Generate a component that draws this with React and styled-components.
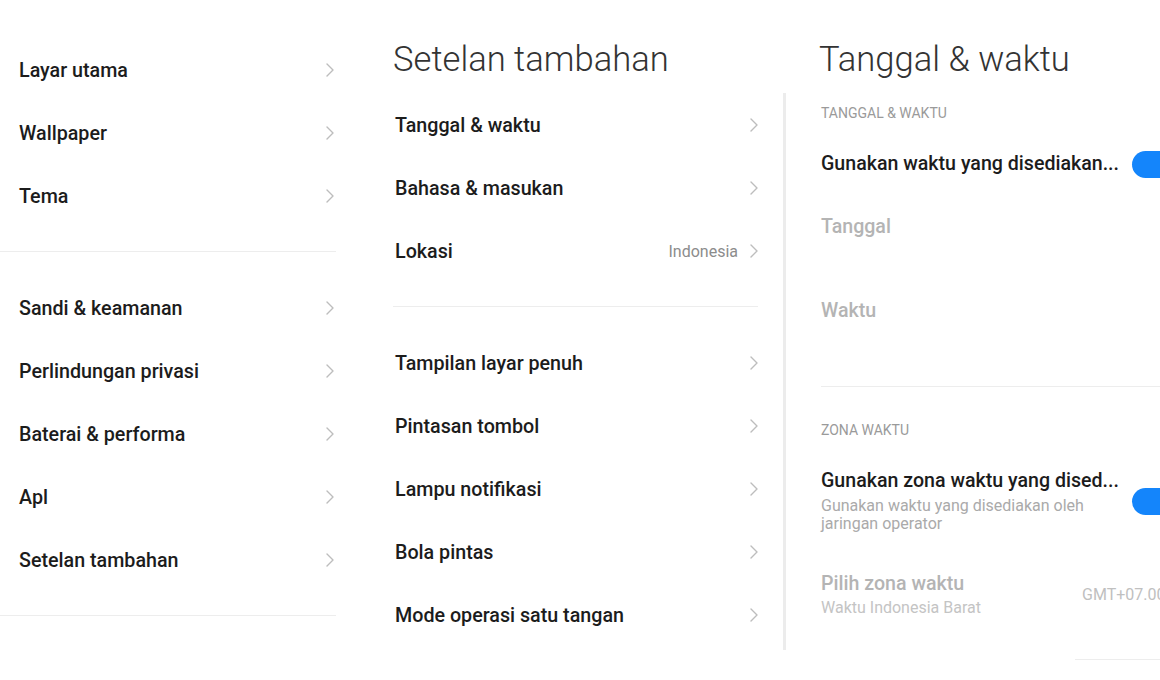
import React from "react";
import styled, { createGlobalStyle } from "styled-components";

const GlobalStyle = createGlobalStyle`
  *, *::before, *::after {
    box-sizing: border-box;
  }
  html, body {
    margin: 0;
    padding: 0;
    background: #ffffff;
  }
  body {
    font-family: Roboto, "Noto Sans", "Liberation Sans", sans-serif;
    -webkit-font-smoothing: antialiased;
  }
`;

const Page = styled.div`
  display: flex;
  align-items: flex-start;
  width: 1160px;
  height: 680px;
  overflow: hidden;
  background: #ffffff;
`;

const Column = styled.div`
  flex: 0 0 ${(p) => p.$width}px;
  margin-left: ${(p) => p.$offset || 0}px;
  padding-top: ${(p) => p.$top || 0}px;
  display: flex;
  flex-direction: column;
`;

const PageTitle = styled.h1`
  margin: 39px 0 14px ${(p) => p.$indent || 0}px;
  height: 40px;
  line-height: 40px;
  font-size: 34.6px;
  font-weight: 300;
  color: #333333;
  white-space: nowrap;
`;

const Item = styled.div`
  display: flex;
  align-items: center;
  height: 63px;
  padding: 1px ${(p) => p.$right || 0}px 0 ${(p) => p.$left || 0}px;
`;

const ItemLabel = styled.span`
  flex: 1;
  font-size: 19.7px;
  font-weight: 500;
  color: #1c1c1c;
  white-space: nowrap;
`;

const ItemValue = styled.span`
  font-size: 16px;
  color: #8c8c8c;
  margin-right: 12px;
`;

const Divider = styled.div`
  flex: 0 0 1px;
  height: 1px;
  background: #ededed;
  margin: ${(p) => p.$margin || "24px 0"};
`;

const Panel = styled.div`
  border-left: 3px solid #ececec;
  padding-left: 35px;
  height: 557px;
  display: flex;
  flex-direction: column;
`;

const SectionHeader = styled.div`
  flex: 0 0 auto;
  margin-top: ${(p) => p.$top}px;
  height: 16px;
  line-height: 16px;
  font-size: 14px;
  color: #9a9a9a;
`;

const Row = styled.div`
  flex: 0 0 auto;
  display: flex;
  align-items: ${(p) => (p.$top ? "flex-start" : "center")};
  height: ${(p) => (p.$height ? `${p.$height}px` : "auto")};
  margin-top: ${(p) => p.$mt || 0}px;
  padding-top: ${(p) => p.$pt || 0}px;
`;

const RowMain = styled.div`
  flex: 0 0 ${(p) => p.$width}px;
  display: flex;
  flex-direction: column;
`;

const RowTitle = styled.div`
  height: 24px;
  line-height: 24px;
  font-size: 19.6px;
  font-weight: 500;
  color: ${(p) => (p.$muted ? "#b4b4b4" : "#1c1c1c")};
  white-space: nowrap;
`;

const RowSub = styled.div`
  line-height: 18px;
  font-size: 16px;
  color: ${(p) => (p.$muted ? "#c4c4c4" : "#aaaaaa")};
  margin-top: ${(p) => p.$mt || 0}px;
  white-space: nowrap;
`;

const RowValue = styled.span`
  font-size: 16px;
  color: #c0c0c0;
  white-space: nowrap;
`;

const Toggle = styled.div`
  flex: 0 0 60px;
  height: 27px;
  border-radius: 14px;
  background: #1485fb;
`;

const Chevron = () => (
  <svg width="8" height="14" viewBox="0 0 8 14">
    <polyline
      points="1,1 7,7 1,13"
      fill="none"
      stroke="#bdbdbd"
      strokeWidth="1.4"
      strokeLinecap="round"
      strokeLinejoin="round"
    />
  </svg>
);

const mainTop = ["Layar utama", "Wallpaper", "Tema"];
const mainBottom = [
  "Sandi & keamanan",
  "Perlindungan privasi",
  "Baterai & performa",
  "Apl",
  "Setelan tambahan",
];

const extraTop = [
  { label: "Tanggal & waktu" },
  { label: "Bahasa & masukan" },
  { label: "Lokasi", value: "Indonesia" },
];
const extraBottom = [
  "Tampilan layar penuh",
  "Pintasan tombol",
  "Lampu notifikasi",
  "Bola pintas",
  "Mode operasi satu tangan",
];

const App = () => {
  return (
    <>
      <GlobalStyle />
      <Page>
        <Column $width={336} $top={38}>
          {mainTop.map((label) => (
            <Item key={label} $left={19} $right={2}>
              <ItemLabel>{label}</ItemLabel>
              <Chevron />
            </Item>
          ))}
          <Divider />
          {mainBottom.map((label) => (
            <Item key={label} $left={19} $right={2}>
              <ItemLabel>{label}</ItemLabel>
              <Chevron />
            </Item>
          ))}
          <Divider />
        </Column>

        <Column $width={365} $offset={57}>
          <PageTitle>Setelan tambahan</PageTitle>
          {extraTop.map((it) => (
            <Item key={it.label} $left={2} $right={0}>
              <ItemLabel>{it.label}</ItemLabel>
              {it.value && <ItemValue>{it.value}</ItemValue>}
              <Chevron />
            </Item>
          ))}
          <Divider />
          {extraBottom.map((label) => (
            <Item key={label} $left={2} $right={0}>
              <ItemLabel>{label}</ItemLabel>
              <Chevron />
            </Item>
          ))}
        </Column>

        <Column $width={420} $offset={25}>
          <PageTitle $indent={36}>Tanggal &amp; waktu</PageTitle>
          <Panel>
            <SectionHeader $top={12}>TANGGAL &amp; WAKTU</SectionHeader>
            <Row $height={84} $pt={2}>
              <RowMain $width={311}>
                <RowTitle>Gunakan waktu yang disediakan...</RowTitle>
              </RowMain>
              <Toggle />
            </Row>
            <Row $height={84} $top $pt={10}>
              <RowMain $width={311}>
                <RowTitle $muted>Tanggal</RowTitle>
              </RowMain>
            </Row>
            <Row $height={84} $top $pt={10}>
              <RowMain $width={311}>
                <RowTitle $muted>Waktu</RowTitle>
              </RowMain>
            </Row>
            <Divider $margin="13px 0 0" />
            <SectionHeader $top={35}>ZONA WAKTU</SectionHeader>
            <Row $mt={31}>
              <RowMain $width={311}>
                <RowTitle>Gunakan zona waktu yang dised...</RowTitle>
                <RowSub $mt={4}>
                  Gunakan waktu yang disediakan oleh
                  <br />
                  jaringan operator
                </RowSub>
              </RowMain>
              <Toggle />
            </Row>
            <Row $mt={39}>
              <RowMain $width={261}>
                <RowTitle $muted>Pilih zona waktu</RowTitle>
                <RowSub $muted $mt={3}>
                  Waktu Indonesia Barat
                </RowSub>
              </RowMain>
              <RowValue>GMT+07.00</RowValue>
            </Row>
          </Panel>
          <Divider $margin="9px 0 0 292px" />
        </Column>
      </Page>
    </>
  );
};

export default App;
